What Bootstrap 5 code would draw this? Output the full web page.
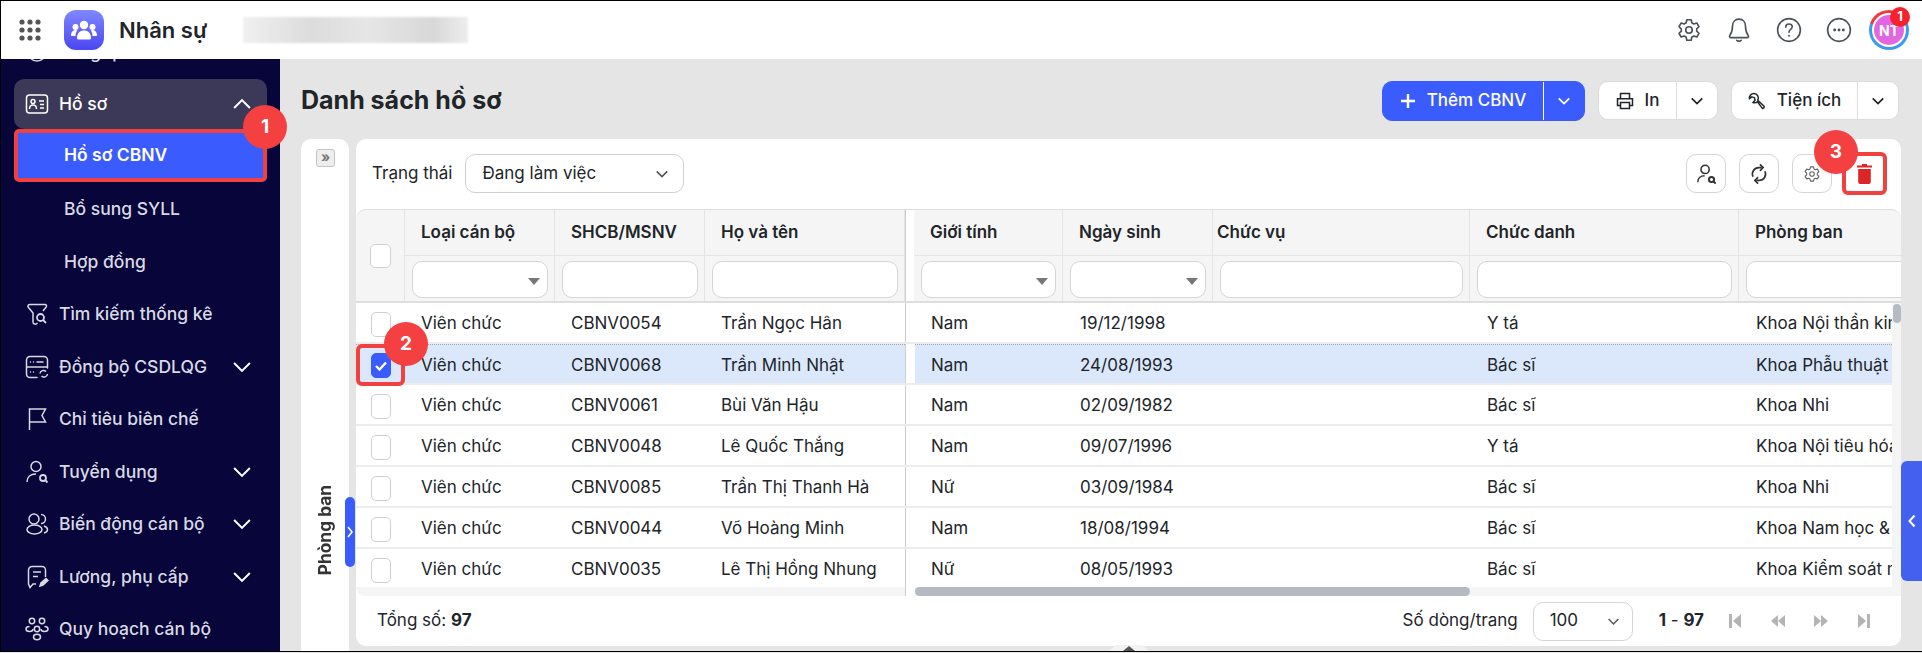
<!DOCTYPE html>
<html lang="vi">
<head>
    <meta charset="UTF-8">
    <title>Nhân sự</title>
    <link href="https://cdn.jsdelivr.net/npm/bootstrap@5.3.0/dist/css/bootstrap.min.css" rel="stylesheet">
    <style>
        html, body { height: 100%; }
        body { font-family: Inter, "Noto Sans", sans-serif; font-size: 17px; color: #212529; background: #e5e5e5; overflow: hidden; }
        .app-frame { width: 1922px; height: 652px; border: solid #000; border-width: 1px 0 1px 1px; position: relative; overflow: hidden; display: flex; flex-direction: column; }
        .top-bar { height: 58px; flex: none; background: #fff; padding: 0 13px 0 18px; position: relative; z-index: 3; }
        .app-logo { width: 40px; height: 40px; border-radius: 12px; background: linear-gradient(180deg, #7f87ff, #4a46f2); margin: 0 15px 0 23px; }
        .app-name { font-size: 22px; font-weight: 600; color: #212529; }
        .blur-box { width: 225px; height: 26px; margin-left: 36px; background: linear-gradient(90deg, #f0f0f0, #dcdcdc 30%, #e6e6e6 55%, #d8d8d8 85%, #eee); filter: blur(1px); }
        .top-icons { gap: 24px; }
        .top-ico { width: 26px; height: 26px; color: #495057; }
        .avatar-ring { width: 40px; height: 40px; margin-left: -7px; border-radius: 50%; background: conic-gradient(from -70deg, #f03a3a 0 100deg, #3b9bf0 100deg 360deg); padding: 3px; position: relative; }
        .avatar-in { width: 100%; height: 100%; border-radius: 50%; background: #e266e0; border: 2px solid #fff; color: #fff; font-size: 14px; font-weight: 700; }
        .avatar-num { position: absolute; top: -3px; right: -1px; width: 20px; height: 20px; border-radius: 50%; background: #f5222d; color: #fff; font-size: 13px; font-weight: 700; }
        .body-wrap { flex: 1; min-height: 0; display: flex; }
        .side-bar { width: 279px; flex: none; background: #07053a; overflow: hidden; padding: 0 13px; }
        .side-item { height: 52.5px; color: #d9d9e3; font-size: 17.5px; font-weight: 500; padding: 0 16px 0 11px; white-space: nowrap; }
        .side-item svg.lead-ico { width: 24px; height: 24px; margin-right: 10px; flex: none; }
        .side-item .chev { margin-left: auto; width: 18px; height: 18px; color: #fff; flex: none; }
        .side-first { margin-top: -33px; }
        .side-open { background: #3b3858; border-radius: 10px; height: 50px; color: #fff; margin-top: .5px; }
        .side-sub { padding-left: 50px; }
        .side-active { background: #3a5cff; color: #fff; font-weight: 600; height: 53px; border: 4px solid #f04040; border-radius: 5px; margin-bottom: 1px; padding-left: 46px; }
        .content-area { flex: 1; min-width: 0; padding: 22px 20px 0 21px; }
        .page-title { font-size: 25px; font-weight: 700; color: #212529; margin: 0; }
        .title-row { height: 58px; align-items: flex-start; }
        .page-title-wrap { padding-top: 4px; }
        .title-actions { gap: 13px; padding-right: 3px; }
        .split-btn { height: 39px; border: 1px solid #dcdcdc; border-radius: 10px; background: #fff; color: #212529; font-size: 17px; font-weight: 500; overflow: hidden; }
        .split-add { width: 203px; }
        .split-print { width: 120px; }
        .split-tools { width: 168px; }
        .split-main { padding: 0 12px; height: 100%; gap: 11px; }
        .split-drop { width: 41px; height: 100%; border-left: 1px solid #dcdcdc; flex: none; }
        .split-blue { background: #3a5cff; border-color: #3a5cff; color: #fff; height: 40px; }
        .split-blue .split-drop { border-left: 1px solid #fff; }
        .work-row { height: 513px; gap: 7px; }
        .dept-panel { width: 48px; flex: none; background: #fff; border-radius: 10px 10px 0 0; position: relative; margin-bottom: -2px; }
        .dept-expand { position: absolute; left: 15px; top: 10px; width: 19px; height: 18px; border: 1px solid #c4c4c4; border-radius: 3px; background: #eee; color: #777; font-size: 14px; line-height: 14px; text-align: center; font-weight: 700; }
        .dept-title { position: absolute; left: 11px; bottom: 79px; writing-mode: vertical-rl; transform: rotate(180deg); font-size: 17.3px; font-weight: 700; color: #333; white-space: nowrap; }
        .dept-toggle { position: absolute; left: 44px; top: 358px; width: 10px; height: 70px; background: #3a5cff; border-radius: 5px; color: #fff; z-index: 2; }
        .main-card { width: 1545px; height: 507px; flex: none; background: #fff; border-radius: 10px; position: relative; overflow: hidden; }
        .tool-row { height: 70px; padding: 15px 0 0 16px; }
        .tool-label { margin-right: 13px; line-height: 39px; }
        .status-pick { width: 219px; height: 39px; border: 1px solid #d0d0d0; border-radius: 10px; padding: 0 14px 0 16px; }
        .tool-btn { width: 40px; height: 39px; border: 1px solid #d5d5d5; border-radius: 10px; background: #fff; color: #333; margin-right: 13px; }
        .tool-gear { color: #666; }
        .tool-trash { width: 40px; height: 39px; margin-left: -1px; }
        .tool-right { margin-left: auto; padding-right: 17px; }
        .grid-head { height: 94px; background: #f5f5f5; border: 1px solid #dedede; border-width: 1px 0 2px 0; border-radius: 10px 10px 0 0; width: 1545px; overflow: hidden; }
        .head-cell { flex: none; border-right: 1px solid #e4e4e4; }
        .head-label { height: 46px; border-bottom: 1px solid #e4e4e4; padding: 0 16px; font-weight: 600; white-space: nowrap; }
        .head-tight { padding-left: 4px; }
        .head-filter { height: 46px; padding: 5px 6px 0 7px; position: relative; }
        .filter-box { height: 37px; width: 100%; border: 1px solid #d5d5d5; border-radius: 10px; background: #fff; position: relative; }
        .filter-caret::after { content: ""; position: absolute; right: 7px; top: 16px; border: 6px solid transparent; border-top: 7px solid #777; border-bottom: 0; }
        .chk-cell { flex: none; width: 49px; border-right: 1px solid #e4e4e4; }
        .chk-wrap { flex: none; width: 49px; }
        .chk-box { width: 20px; height: 25px; border: 1px solid #cfcfcf; border-radius: 5px; background: #fff; }
        .head-chk { width: 21px; height: 24px; }
        .freeze-gap { flex: none; width: 10px; background: #fff; border-left: 1px solid #cdcdcd; }
        .freeze-head { background: #fff; border-left: 1px solid #cdcdcd; width: 9px; flex: none; }
        .grid-body { height: 284px; overflow: hidden; width: 1545px; background: #f5f5f5; }
        .grid-row { width: 1536px; height: 41px; background: #fff; border-bottom: 2px solid #ececec; white-space: nowrap; }
        .grid-row.picked .row-fill { background: #dbe8fc; border-top: 1px dotted #a8a8a8; }
        .row-fill { display: flex; align-items: center; height: 100%; padding-top: 3px; flex: none; }
        .fill-left { width: 549px; }
        .fill-right { width: 977px; }
        .body-cell { flex: none; padding: 0 16px; overflow: hidden; }
        .cell-last { padding-right: 0; }
        .wd-149 { width: 149px; }
        .wd-150 { width: 150px; }
        .wd-152 { width: 152px; }
        .wd-200 { width: 200px; }
        .wd-257 { width: 257px; }
        .wd-269 { width: 269px; }
        .wd-300 { width: 300px; }
        .chk-on { background: #3a5cff; border-color: #3a5cff; color: #fff; }
        .grid-bottom { height: 9px; width: 1545px; background: #f5f5f5; border-radius: 0 0 0 10px; position: relative; }
        .bottom-gap { position: absolute; left: 549px; top: 0; width: 10px; height: 9px; background: #fff; border-left: 1px solid #cdcdcd; }
        .hscroll-thumb { position: absolute; left: 559px; top: 0; width: 555px; height: 9px; background: #b6bbc3; border-radius: 5px; }
        .vscroll-thumb { position: absolute; right: 0; top: 165px; width: 8px; height: 19px; background: #b6bbc3; border-radius: 4px; }
        .grid-foot { height: 50px; padding: 0 30px 0 21px; }
        .page-pick { width: 100px; height: 39px; border: 1px solid #d5d5d5; border-radius: 10px; padding: 0 12px 0 16px; margin: 0 26px 0 15px; }
        .page-ico { width: 14px; height: 16px; color: #b4b4b4; margin-left: 29px; flex: none; }
        .page-first { margin-left: 24px; }
        .right-tab { position: absolute; right: 0; top: 460px; width: 21px; height: 120px; background: #4361ee; border-radius: 6px 0 0 6px; color: #fff; z-index: 2; }
        .resize-notch { position: absolute; left: 1107px; top: 644px; width: 42px; height: 7px; background: #f2f2f2; clip-path: polygon(18% 0, 82% 0, 100% 100%, 0 100%); z-index: 2; }
        .resize-notch::after { content: ""; position: absolute; left: 15px; top: 1px; border: 6px solid transparent; border-bottom: 5px solid #555; border-top: 0; }
        .mark-box { position: absolute; border: 4px solid #f04040; border-radius: 6px; z-index: 5; }
        .mark-row { left: 355px; top: 343px; width: 49px; height: 42px; }
        .mark-trash { left: 1841px; top: 151px; width: 45px; height: 43px; }
        .mark-num { position: absolute; width: 44px; height: 44px; background: #f44040; color: #fff; border-radius: 50%; font-weight: 700; font-size: 19px; z-index: 6; }
        .num-one { left: 242px; top: 104px; }
        .num-two { left: 383px; top: 321px; }
        .num-three { left: 1813px; top: 129px; }
    </style>
</head>
<body>
<div class="app-frame">
    <div class="top-bar d-flex align-items-center">
        <svg width="22" height="22" viewBox="0 0 22 22" fill="#555"><circle cx="3" cy="3" r="2.6"/><circle cx="11" cy="3" r="2.6"/><circle cx="19" cy="3" r="2.6"/><circle cx="3" cy="11" r="2.6"/><circle cx="11" cy="11" r="2.6"/><circle cx="19" cy="11" r="2.6"/><circle cx="3" cy="19" r="2.6"/><circle cx="11" cy="19" r="2.6"/><circle cx="19" cy="19" r="2.6"/></svg>
        <div class="app-logo d-flex align-items-center justify-content-center">
            <svg width="26" height="20" viewBox="0 0 26 20" fill="#fff"><circle cx="13" cy="5" r="4.2"/><circle cx="4.5" cy="7" r="3"/><circle cx="21.5" cy="7" r="3"/><path d="M6 18c0-5 3-7.500 7-7.500s7 2.500 7 7.500c0 1-1 1.500-2 1.500H8c-1 0-2-.5-2-1.500z"/><path d="M0 15c0-3 2-5 4.500-5 .8 0 1.300.2 1.800.5C5 12 4.500 14 4.500 16H1c-.6 0-1-.4-1-1zM26 15c0-3-2-5-4.500-5-.8 0-1.300.2-1.800.5 1.300 1.500 1.800 3.500 1.800 5.500H25c.6 0 1-.4 1-1z"/></svg>
        </div>
        <span class="app-name">Nhân sự</span>
        <div class="blur-box"></div>
        <div class="top-icons ms-auto d-flex align-items-center">
            <svg class="top-ico" viewBox="0 0 24 24" fill="none" stroke="currentColor" stroke-width="1.500"><circle cx="12" cy="12" r="3"/><path d="M10 2.500h4l.6 2.800 1.900 1.100 2.700-.9 2 3.500-2.100 1.900v2.200l2.100 1.900-2 3.500-2.700-.9-1.900 1.100-.6 2.800h-4l-.6-2.800-1.900-1.100-2.700.9-2-3.500 2.100-1.900v-2.200L2.800 9l2-3.500 2.700.9 1.900-1.100z" stroke-linejoin="round"/></svg>
            <svg class="top-ico" viewBox="0 0 24 24" fill="none" stroke="currentColor" stroke-width="1.500"><path d="M12 2c-3.800 0-6 2.800-6 6.500 0 4.500-1 6.500-2.500 8.500-.6.8-.2 2 1 2h15c1.200 0 1.600-1.200 1-2C19 15 18 13 18 8.500 18 4.800 15.800 2 12 2z" stroke-linejoin="round"/><path d="M10 21.500c.5 1 3.500 1 4 0" stroke-linecap="round"/></svg>
            <svg class="top-ico" viewBox="0 0 24 24" fill="none" stroke="currentColor" stroke-width="1.500"><circle cx="12" cy="12" r="10.500"/><path d="M9 9.300c0-1.700 1.300-2.800 3-2.800s3 1.100 3 2.600c0 2.400-3 2.300-3 4.900" stroke-linecap="round"/><circle cx="12" cy="17.300" r=".9" fill="currentColor" stroke="none"/></svg>
            <svg class="top-ico" viewBox="0 0 24 24" fill="none" stroke="currentColor" stroke-width="1.500"><circle cx="12" cy="12" r="10.500"/><circle cx="8" cy="12" r=".6" fill="currentColor"/><circle cx="12" cy="12" r=".6" fill="currentColor"/><circle cx="16" cy="12" r=".6" fill="currentColor"/></svg>
            <div class="avatar-ring">
                <div class="avatar-in d-flex align-items-center justify-content-center">NT</div>
                <div class="avatar-num d-flex align-items-center justify-content-center">1</div>
            </div>
        </div>
    </div>
    <div class="body-wrap">
        <div class="side-bar">
            <div class="side-item side-first d-flex align-items-center">
                <svg class="lead-ico" viewBox="0 0 24 24" fill="none" stroke="currentColor" stroke-width="1.500"><circle cx="12" cy="12" r="9"/></svg>Tổng quan
            </div>
            <div class="side-item side-open d-flex align-items-center">
                <svg class="lead-ico" viewBox="0 0 24 24" fill="none" stroke="currentColor" stroke-width="1.500"><rect x="1.500" y="3" width="21" height="18" rx="3"/><circle cx="8" cy="9.500" r="2"/><path d="M4.500 17c0-2.500 1.500-4 3.500-4s3.500 1.500 3.500 4M14 9h5M15 12.500h4M15 16h4"/></svg>Hồ sơ
                <svg class="chev" viewBox="0 0 16 16" fill="none" stroke="currentColor" stroke-width="1.800"><path d="M1 11.500 8 4.500l7 7"/></svg>
            </div>
            <div class="side-item side-active d-flex align-items-center">Hồ sơ CBNV</div>
            <div class="side-item side-sub d-flex align-items-center">Bổ sung SYLL</div>
            <div class="side-item side-sub d-flex align-items-center">Hợp đồng</div>
            <div class="side-item d-flex align-items-center">
                <svg class="lead-ico" viewBox="0 0 24 24" fill="none" stroke="currentColor" stroke-width="1.500"><path d="M5 2.500h15c1.500 0 2 1.500 1 2.800L18 9M5 2.500c-2 0-2.700 1.800-1.500 3L8 11v9c0 2.500 3 2.800 4.500 1" stroke-linejoin="round"/><circle cx="15.500" cy="15.500" r="3.500" stroke-width="1.800"/><path d="m18 18 3 3" stroke-width="1.800"/></svg>Tìm kiếm thống kê
            </div>
            <div class="side-item d-flex align-items-center">
                <svg class="lead-ico" viewBox="0 0 24 24" fill="none" stroke="currentColor" stroke-width="1.500"><path d="M12 22.500H5A3.500 3.500 0 0 1 1.500 19V5A3.500 3.500 0 0 1 5 1.500h14A3.500 3.500 0 0 1 22.500 5v8M1.500 12h21M5.500 7h.01M8.500 7h.01M12 7h6M5.500 17h.01M8.500 17h.01" stroke-linecap="round"/><path d="M15 18.500a3.500 3.500 0 0 1 6-2M22.500 19a3.500 3.500 0 0 1-6 2"/></svg>Đồng bộ CSDLQG
                <svg class="chev" viewBox="0 0 16 16" fill="none" stroke="currentColor" stroke-width="1.800"><path d="M1 4.500 8 11.500l7-7"/></svg>
            </div>
            <div class="side-item d-flex align-items-center">
                <svg class="lead-ico" viewBox="0 0 24 24" fill="none" stroke="currentColor" stroke-width="1.500"><path d="M4.500 23V2h16l-3.500 6.500 3.500 6.500h-16"/></svg>Chỉ tiêu biên chế
            </div>
            <div class="side-item d-flex align-items-center">
                <svg class="lead-ico" viewBox="0 0 24 24" fill="none" stroke="currentColor" stroke-width="1.500"><circle cx="11" cy="6.500" r="5"/><path d="M2 22c0-5 3.500-8 9-8"/><circle cx="18" cy="18" r="3" stroke-width="1.800"/><path d="m20.200 20.200 2.300 2.300" stroke-width="1.800"/></svg>Tuyển dụng
                <svg class="chev" viewBox="0 0 16 16" fill="none" stroke="currentColor" stroke-width="1.800"><path d="M1 4.500 8 11.500l7-7"/></svg>
            </div>
            <div class="side-item d-flex align-items-center">
                <svg class="lead-ico" viewBox="0 0 24 24" fill="none" stroke="currentColor" stroke-width="1.500"><circle cx="9" cy="7" r="5"/><ellipse cx="9.500" cy="17.500" rx="7.500" ry="4.500"/><path d="M16 2.500a4.500 4.500 0 0 1 0 9M19 14c2 .7 3.500 2 3.500 3.500S21 20.500 19 21"/></svg>Biến động cán bộ
                <svg class="chev" viewBox="0 0 16 16" fill="none" stroke="currentColor" stroke-width="1.800"><path d="M1 4.500 8 11.500l7-7"/></svg>
            </div>
            <div class="side-item d-flex align-items-center">
                <svg class="lead-ico" viewBox="0 0 24 24" fill="none" stroke="currentColor" stroke-width="1.500"><path d="M11 19H8l-3 3.500L3.500 19V5A3.500 3.500 0 0 1 7 1.500h10A3.500 3.500 0 0 1 20.500 5v7M8 7h8M8 11.500h5"/><path d="m15 21 1-3 5-4.500 2 2-5 4.500z" fill="currentColor"/></svg>Lương, phụ cấp
                <svg class="chev" viewBox="0 0 16 16" fill="none" stroke="currentColor" stroke-width="1.800"><path d="M1 4.500 8 11.500l7-7"/></svg>
            </div>
            <div class="side-item d-flex align-items-center">
                <svg class="lead-ico" viewBox="0 0 24 24" fill="none" stroke="currentColor" stroke-width="1.500"><circle cx="7" cy="4" r="2.700"/><circle cx="17" cy="4" r="2.700"/><circle cx="12" cy="12" r="2.700"/><path d="M4.500 9.500C2.500 9.500 1 10.700 1 12s1.500 2.500 3.500 2.500 3.500-1.200 3.500-2.500M19.500 9.500c2 0 3.500 1.200 3.500 2.500s-1.500 2.500-3.500 2.500S16 13.300 16 12"/><ellipse cx="12" cy="20" rx="3.500" ry="2.700"/></svg>Quy hoạch cán bộ
            </div>
        </div>
        <div class="content-area">
            <div class="title-row d-flex">
                <div class="page-title-wrap"><h1 class="page-title">Danh sách hồ sơ</h1></div>
                <div class="title-actions ms-auto d-flex align-items-start">
                    <div class="split-btn split-blue split-add d-flex align-items-center">
                        <div class="split-main d-flex align-items-center flex-grow-1 justify-content-center">
                            <svg width="16" height="16" viewBox="0 0 16 16" fill="none" stroke="currentColor" stroke-width="2.400"><path d="M8 1v14M1 8h14"/></svg>Thêm CBNV
                        </div>
                        <div class="split-drop d-flex align-items-center justify-content-center"><svg width="14" height="14" viewBox="0 0 16 16" fill="none" stroke="currentColor" stroke-width="2"><path d="M2 5l6 6 6-6"/></svg></div>
                    </div>
                    <div class="split-btn split-print d-flex align-items-center">
                        <div class="split-main d-flex align-items-center flex-grow-1 justify-content-center">
                            <svg width="18" height="18" viewBox="0 0 24 24" fill="none" stroke="currentColor" stroke-width="2"><path d="M6 8V2h12v6M6 18H2V9h20v9h-4"/><rect x="6" y="14" width="12" height="8"/></svg>In
                        </div>
                        <div class="split-drop d-flex align-items-center justify-content-center"><svg width="14" height="14" viewBox="0 0 16 16" fill="none" stroke="currentColor" stroke-width="2"><path d="M2 5l6 6 6-6"/></svg></div>
                    </div>
                    <div class="split-btn split-tools d-flex align-items-center">
                        <div class="split-main d-flex align-items-center flex-grow-1 justify-content-center">
                            <svg width="18" height="18" viewBox="0 0 24 24" fill="none" stroke="currentColor" stroke-width="2"><path d="M8 2a6 6 0 0 0-6 7l3-2.500 3.500 1 1 3.500-3 3a6 6 0 0 0 6-1l6.500 8.500c1 1 3.500-1 2.500-2.500L13 11A6 6 0 0 0 8 2z" stroke-linejoin="round"/></svg>Tiện ích
                        </div>
                        <div class="split-drop d-flex align-items-center justify-content-center"><svg width="14" height="14" viewBox="0 0 16 16" fill="none" stroke="currentColor" stroke-width="2"><path d="M2 5l6 6 6-6"/></svg></div>
                    </div>
                </div>
            </div>
            <div class="work-row d-flex align-items-start">
                <div class="dept-panel align-self-stretch">
                    <div class="dept-expand">»</div>
                    <div class="dept-title">Phòng ban</div>
                    <div class="dept-toggle d-flex align-items-center justify-content-center"><svg width="8" height="12" viewBox="0 0 8 12" fill="none" stroke="currentColor" stroke-width="1.600"><path d="m2 1 4 5-4 5"/></svg></div>
                </div>
                <div class="main-card">
                    <div class="tool-row d-flex align-items-start">
                        <div class="tool-label">Trạng thái</div>
                        <div class="status-pick d-flex align-items-center justify-content-between">Đang làm việc
                            <svg width="14" height="14" viewBox="0 0 16 16" fill="none" stroke="#555" stroke-width="1.800"><path d="M2 5l6 6 6-6"/></svg>
                        </div>
                        <div class="tool-right d-flex">
                            <div class="tool-btn d-flex align-items-center justify-content-center"><svg width="22" height="22" viewBox="0 0 24 24" fill="none" stroke="currentColor" stroke-width="1.700"><circle cx="11" cy="7" r="4.500"/><path d="M3 21c0-4 3-7 7.500-7"/><circle cx="18" cy="18" r="2.800" stroke-width="2.200"/><path d="m20 20 2.500 2.500" stroke-width="2.200"/></svg></div>
                            <div class="tool-btn d-flex align-items-center justify-content-center"><svg width="20" height="22" viewBox="0 0 20 24" fill="none" stroke="currentColor" stroke-width="1.800"><path d="M3.500 15A7 7 0 0 1 10 5h3M16.500 9A7 7 0 0 1 10 19H7"/><path d="M11 1.500 14.500 5 11 8.500M9 22.500 5.500 19 9 15.500"/></svg></div>
                            <div class="tool-btn tool-gear d-flex align-items-center justify-content-center"><svg width="18" height="18" viewBox="0 0 24 24" fill="none" stroke="currentColor" stroke-width="1.500"><circle cx="12" cy="12" r="3"/><path d="M10 2.500h4l.6 2.800 1.900 1.100 2.700-.9 2 3.500-2.100 1.900v2.200l2.100 1.900-2 3.500-2.700-.9-1.900 1.100-.6 2.800h-4l-.6-2.800-1.900-1.100-2.700.9-2-3.500 2.100-1.900v-2.200L2.800 9l2-3.500 2.700.9 1.900-1.100z" stroke-linejoin="round"/></svg></div>
                            <div class="tool-trash d-flex align-items-center justify-content-center"><svg width="15" height="20" viewBox="0 0 15 20" fill="#dc2626"><path d="M5 0h5v1.500h5v2H0v-2h5z"/><path d="M1.200 5h12.600v13a2 2 0 0 1-2 2H3.200a2 2 0 0 1-2-2z"/></svg></div>
                        </div>
                    </div>
                    <div class="grid-head d-flex">
                        <div class="chk-cell d-flex align-items-center justify-content-center"><div class="chk-box head-chk"></div></div>
                        <div class="head-cell wd-150"><div class="head-label d-flex align-items-center">Loại cán bộ</div><div class="head-filter"><div class="filter-box filter-caret"></div></div></div>
                        <div class="head-cell wd-150"><div class="head-label d-flex align-items-center">SHCB/MSNV</div><div class="head-filter"><div class="filter-box"></div></div></div>
                        <div class="head-cell wd-200"><div class="head-label d-flex align-items-center">Họ và tên</div><div class="head-filter"><div class="filter-box"></div></div></div>
                        <div class="freeze-head"></div>
                        <div class="head-cell wd-149"><div class="head-label d-flex align-items-center">Giới tính</div><div class="head-filter"><div class="filter-box filter-caret"></div></div></div>
                        <div class="head-cell wd-150"><div class="head-label d-flex align-items-center">Ngày sinh</div><div class="head-filter"><div class="filter-box filter-caret"></div></div></div>
                        <div class="head-cell wd-257"><div class="head-label head-tight d-flex align-items-center">Chức vụ</div><div class="head-filter"><div class="filter-box"></div></div></div>
                        <div class="head-cell wd-269"><div class="head-label d-flex align-items-center">Chức danh</div><div class="head-filter"><div class="filter-box"></div></div></div>
                        <div class="head-cell wd-300"><div class="head-label d-flex align-items-center">Phòng ban</div><div class="head-filter"><div class="filter-box"></div></div></div>
                    </div>
                    <div class="grid-body" id="gridBody"></div>
                    <div class="grid-bottom"><div class="bottom-gap"></div><div class="hscroll-thumb"></div></div>
                    <div class="vscroll-thumb"></div>
                    <div class="grid-foot d-flex align-items-center">
                        <div>Tổng số: <b>97</b></div>
                        <div class="ms-auto">Số dòng/trang</div>
                        <div class="page-pick d-flex align-items-center justify-content-between">100
                            <svg width="13" height="13" viewBox="0 0 16 16" fill="none" stroke="#555" stroke-width="1.800"><path d="M2 5l6 6 6-6"/></svg>
                        </div>
                        <div><b>1</b> - <b>97</b></div>
                        <svg class="page-ico page-first" viewBox="0 0 14 16" fill="currentColor"><rect x="1" y="1" width="3" height="14"/><path d="M13 1v14L5 8z"/></svg>
                        <svg class="page-ico" viewBox="0 0 14 16" fill="currentColor"><path d="M7 2v12L0 8zM14 2v12L7 8z"/></svg>
                        <svg class="page-ico" viewBox="0 0 14 16" fill="currentColor"><path d="M0 2v12l7-6zM7 2v12l7-6z"/></svg>
                        <svg class="page-ico" viewBox="0 0 14 16" fill="currentColor"><rect x="10" y="1" width="3" height="14"/><path d="M1 1v14l8-7z"/></svg>
                    </div>
                </div>
            </div>
        </div>
    </div>

    <div class="right-tab d-flex align-items-center justify-content-center"><svg width="10" height="14" viewBox="0 0 10 14" fill="none" stroke="currentColor" stroke-width="2"><path d="M7.500 1.500 2.500 7l5 5.500"/></svg></div>
    <div class="resize-notch"></div>

    <div class="mark-box mark-row"></div>
    <div class="mark-box mark-trash"></div>
    <div class="mark-num num-one d-flex align-items-center justify-content-center">1</div>
    <div class="mark-num num-two d-flex align-items-center justify-content-center">2</div>
    <div class="mark-num num-three d-flex align-items-center justify-content-center">3</div>
</div>

<script>
    const rows = [
        ["CBNV0054", "Trần Ngọc Hân", "Nam", "19/12/1998", "Y tá", "Khoa Nội thần kinh"],
        ["CBNV0068", "Trần Minh Nhật", "Nam", "24/08/1993", "Bác sĩ", "Khoa Phẫu thuật"],
        ["CBNV0061", "Bùi Văn Hậu", "Nam", "02/09/1982", "Bác sĩ", "Khoa Nhi"],
        ["CBNV0048", "Lê Quốc Thắng", "Nam", "09/07/1996", "Y tá", "Khoa Nội tiêu hóa"],
        ["CBNV0085", "Trần Thị Thanh Hà", "Nữ", "03/09/1984", "Bác sĩ", "Khoa Nhi"],
        ["CBNV0044", "Võ Hoàng Minh", "Nam", "18/08/1994", "Bác sĩ", "Khoa Nam học & Y"],
        ["CBNV0035", "Lê Thị Hồng Nhung", "Nữ", "08/05/1993", "Bác sĩ", "Khoa Kiểm soát nhiễm"]
    ];
    const check = '<svg width="14" height="12" viewBox="0 0 14 12" fill="none" stroke="#fff" stroke-width="2.400"><path d="m2 6 3.500 3.500L12 2.500"/></svg>';
    document.getElementById("gridBody").innerHTML = rows.map((r, i) => {
        const picked = i === 1;
        return `<div class="grid-row d-flex ${picked ? "picked" : ""}">
            <div class="row-fill fill-left">
                <div class="chk-wrap d-flex align-items-center justify-content-center"><div class="chk-box d-flex align-items-center justify-content-center ${picked ? "chk-on" : ""}">${picked ? check : ""}</div></div>
                <div class="body-cell wd-150">Viên chức</div>
                <div class="body-cell wd-150">${r[0]}</div>
                <div class="body-cell wd-200">${r[1]}</div>
            </div>
            <div class="freeze-gap"></div>
            <div class="row-fill fill-right">
                <div class="body-cell wd-149">${r[2]}</div>
                <div class="body-cell wd-150">${r[3]}</div>
                <div class="body-cell wd-257"></div>
                <div class="body-cell wd-269">${r[4]}</div>
                <div class="body-cell cell-last wd-152">${r[5]}</div>
            </div>
        </div>`;
    }).join("");
</script>
<script src="https://cdn.jsdelivr.net/npm/bootstrap@5.3.0/dist/js/bootstrap.bundle.min.js"></script>
</body>
</html>
